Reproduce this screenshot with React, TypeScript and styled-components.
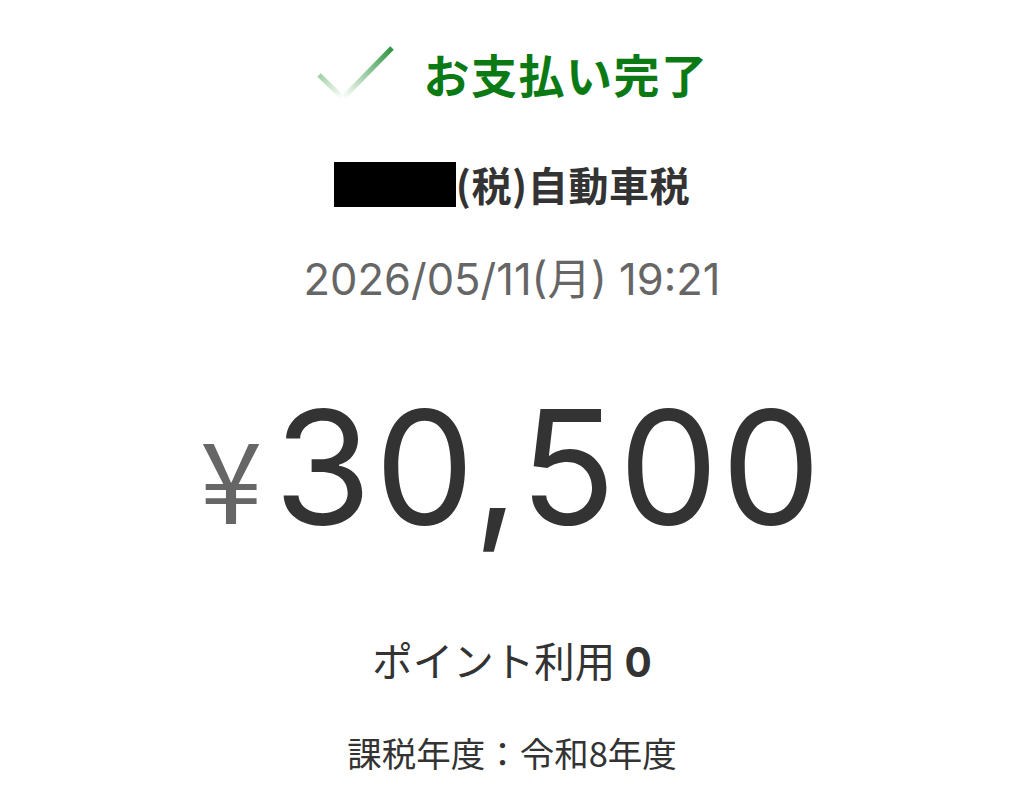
import React from 'react'
import styled, { createGlobalStyle } from 'styled-components'

const GlobalStyle = createGlobalStyle`
  html, body {
    margin: 0;
    padding: 0;
    background: #ffffff;
  }
  body {
    font-family: Inter, "Noto Sans CJK JP", sans-serif;
  }
`

const Page = styled.div`
  display: flex;
  flex-direction: column;
  align-items: center;
  width: 1024px;
  height: 811px;
  padding-top: 44px;
  box-sizing: border-box;
  overflow: hidden;
`

const StatusRow = styled.div`
  display: flex;
  align-items: center;
  gap: 28px;
  height: 58px;
`

const StatusText = styled.h1`
  margin: 0;
  font-family: "Noto Sans CJK JP", sans-serif;
  font-size: 46px;
  font-weight: 700;
  color: #0b7a14;
  letter-spacing: 1.5px;
`

const Merchant = styled.div`
  display: flex;
  align-items: center;
  margin-top: 53px;
  font-family: "Noto Sans CJK JP", sans-serif;
  font-size: 40px;
  font-weight: 700;
  color: #333333;
  letter-spacing: 0.6px;
`

const Redacted = styled.span`
  display: inline-block;
  width: 122px;
  height: 45px;
  background: #000000;
`

const DateText = styled.div`
  margin-top: 32px;
  font-family: Inter, "Noto Sans CJK JP", sans-serif;
  font-size: 43.5px;
  color: #666666;
`

const AmountRow = styled.div`
  display: flex;
  align-items: baseline;
  gap: 12px;
  margin-top: 80px;
  color: #333333;
`

const Yen = styled.span`
  font-family: "Noto Sans CJK JP", sans-serif;
  font-size: 112px;
  line-height: 1;
  color: #666666;
`

const Amount = styled.span`
  font-family: Inter, sans-serif;
  font-size: 158px;
  line-height: 1;
  letter-spacing: 3px;
`

const InfoLine = styled.div<{ $top: number; $size: number }>`
  margin-top: ${(p) => p.$top}px;
  font-family: "Noto Sans CJK JP", sans-serif;
  font-size: ${(p) => p.$size}px;
  color: #333333;
`

const Bold = styled.b`
  font-family: Inter, sans-serif;
  font-weight: 700;
`

const CheckMark = () => (
  <svg width="80" height="58" viewBox="0 0 80 58">
    <defs>
      <linearGradient id="checkShort" x1="0" y1="0" x2="1" y2="1">
        <stop offset="0" stopColor="#9fd0a6" />
        <stop offset="1" stopColor="#ffffff" />
      </linearGradient>
      <linearGradient id="checkLong" x1="0" y1="1" x2="1" y2="0">
        <stop offset="0" stopColor="#ffffff" />
        <stop offset="1" stopColor="#2e9440" />
      </linearGradient>
    </defs>
    <line x1="3" y1="31" x2="27" y2="54" stroke="url(#checkShort)" strokeWidth="5" />
    <line x1="27" y1="54" x2="76" y2="4" stroke="url(#checkLong)" strokeWidth="5" />
  </svg>
)

export default function App() {
  return (
    <>
      <GlobalStyle />
      <Page>
        <StatusRow>
          <CheckMark />
          <StatusText>お支払い完了</StatusText>
        </StatusRow>
        <Merchant>
          <Redacted />
          (税)自動車税
        </Merchant>
        <DateText>2026/05/11(月) 19:21</DateText>
        <AmountRow>
          <Yen>¥</Yen>
          <Amount>30,500</Amount>
        </AmountRow>
        <InfoLine $top={84} $size={40.5}>
          ポイント利用 <Bold>0</Bold>
        </InfoLine>
        <InfoLine $top={38} $size={34.5}>
          課税年度：令和8年度
        </InfoLine>
      </Page>
    </>
  )
}
